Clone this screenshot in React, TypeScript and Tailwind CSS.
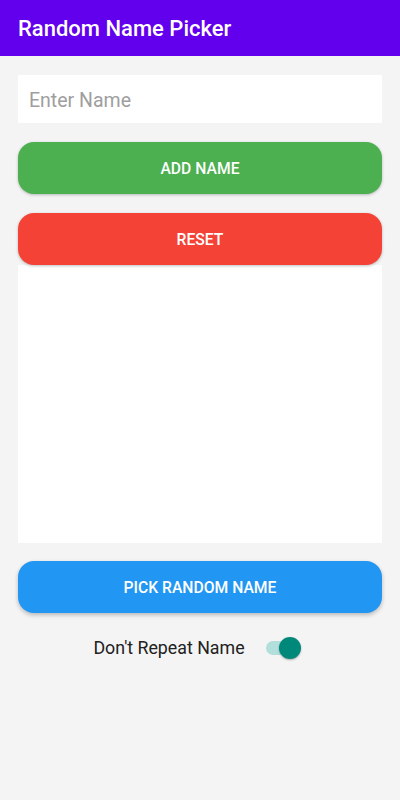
import { useState } from 'react';

export default function App() {
  const [name, setName] = useState('');
  const [noRepeat, setNoRepeat] = useState(true);

  return (
    <div className="min-h-[800px] w-[400px] bg-[#f4f4f4] font-['Roboto',sans-serif]">
      <header className="h-14 bg-[#6200ee] flex items-center px-[18px]">
        <h1 className="text-white text-[22px] font-medium">Random Name Picker</h1>
      </header>

      <main className="px-[18px] pt-[19px] flex flex-col">
        <input
          value={name}
          onChange={(e) => setName(e.target.value)}
          placeholder="Enter Name"
          className="h-12 bg-white px-[11px] pt-[2px] text-[19.5px] text-gray-800 placeholder:text-[#9e9e9e] outline-none"
        />

        <button className="mt-[19px] h-[52px] pt-[2px] rounded-2xl bg-[#4caf50] text-white text-[15.7px] font-medium shadow-[0_1px_3px_rgba(0,0,0,0.25)]">
          ADD NAME
        </button>

        <button className="relative z-10 mt-[19px] h-[52px] pt-[2px] rounded-2xl bg-[#f44336] text-white text-[15.7px] font-medium shadow-[0_1px_3px_rgba(0,0,0,0.25)]">
          RESET
        </button>

        <div className="h-[278px] bg-white" />

        <button className="mt-[18px] h-[52px] pt-[2px] rounded-2xl bg-[#2196f3] text-white text-[15.7px] font-medium shadow-[0_2px_4px_rgba(0,0,0,0.25)]">
          PICK RANDOM NAME
        </button>

        <div className="mt-[22px] flex items-center justify-center gap-[21px] pr-[5px]">
          <span className="text-[17.8px] text-[#212121]">Don't Repeat Name</span>
          <button
            onClick={() => setNoRepeat(!noRepeat)}
            className="relative w-[36px] h-[24px] flex items-center"
          >
            <span className={`block w-[34px] h-[14px] rounded-full ${noRepeat ? 'bg-[#b2dfdb]' : 'bg-[#bdbdbd]'}`} />
            <span
              className={`absolute top-[1px] w-[22px] h-[22px] rounded-full shadow-[0_1px_2px_rgba(0,0,0,0.3)] ${noRepeat ? 'left-[13px] bg-[#00897b]' : 'left-0 bg-[#fafafa]'}`}
            />
          </button>
        </div>
      </main>
    </div>
  );
}
